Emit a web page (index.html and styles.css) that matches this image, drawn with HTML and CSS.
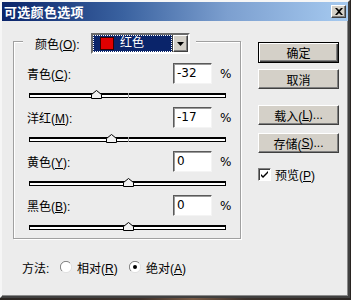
FILE: index.html
```html
<!DOCTYPE html>
<html lang="zh-CN">
<head>
<meta charset="utf-8">
<title>可选颜色选项</title>
<link rel="stylesheet" href="styles.css">
</head>
<body>
<div class="window">
  <div class="titlebar">
    <span class="title">可选颜色选项</span>
    <span class="close"><svg width="8" height="7" viewBox="0 0 8 7"><path d="M0 0h2l2 2 2-2h2L5 3.5 8 7H6L4 5 2 7H0l3-3.5z" fill="#000"/></svg></span>
  </div>
  <div class="client">
    <div class="main">
      <div class="left">
        <div class="group-head">
          <span class="head-lbl">颜色(<u>O</u>):</span>
          <div class="select">
            <span class="select-field"><span class="swatch"></span><span class="select-text">红色</span></span>
            <span class="select-btn"><svg width="7" height="4" viewBox="0 0 7 4"><path d="M0 0h7L3.5 4z" fill="#000"/></svg></span>
          </div>
        </div>
        <div class="group">
          <div class="row"><span class="lbl">青色(<u>C</u>):</span><span class="field">-32</span><span class="pct">%</span></div>
          <div class="slider"><div class="track"><span class="mid"></span><svg class="thumb" style="left:61px" width="11" height="9" viewBox="0 0 11 9"><path d="M0.5 8.5V4.5L5.5 0.5L10.5 4.5V8.5Z" fill="#f2f2f2" stroke="#000"/></svg></div></div>
          <div class="row"><span class="lbl">洋红(<u>M</u>):</span><span class="field">-17</span><span class="pct">%</span></div>
          <div class="slider"><div class="track"><span class="mid"></span><svg class="thumb" style="left:76px" width="11" height="9" viewBox="0 0 11 9"><path d="M0.5 8.5V4.5L5.5 0.5L10.5 4.5V8.5Z" fill="#f2f2f2" stroke="#000"/></svg></div></div>
          <div class="row"><span class="lbl">黄色(<u>Y</u>):</span><span class="field">0</span><span class="pct">%</span></div>
          <div class="slider"><div class="track"><span class="mid"></span><svg class="thumb" style="left:93px" width="11" height="9" viewBox="0 0 11 9"><path d="M0.5 8.5V4.5L5.5 0.5L10.5 4.5V8.5Z" fill="#f2f2f2" stroke="#000"/></svg></div></div>
          <div class="row"><span class="lbl">黑色(<u>B</u>):</span><span class="field">0</span><span class="pct">%</span></div>
          <div class="slider"><div class="track"><span class="mid"></span><svg class="thumb" style="left:93px" width="11" height="9" viewBox="0 0 11 9"><path d="M0.5 8.5V4.5L5.5 0.5L10.5 4.5V8.5Z" fill="#f2f2f2" stroke="#000"/></svg></div></div>
        </div>
      </div>
      <div class="right">
        <button class="btn btn-default">确定</button>
        <button class="btn btn-cancel">取消</button>
        <button class="btn btn-load">载入(<u>L</u>)...</button>
        <button class="btn btn-save">存储(<u>S</u>)...</button>
        <label class="check"><span class="box"><svg width="9" height="9" viewBox="0 0 9 9"><path d="M1 4l2 2 5-5v2L3 8 1 6z" fill="#000"/></svg></span><span>预览(<u>P</u>)</span></label>
      </div>
    </div>
    <div class="method">
      <span class="method-lbl">方法:</span>
      <span class="radio"><svg width="12" height="12" viewBox="0 0 12 12"><circle cx="6" cy="6" r="5.5" fill="#fff"/><path d="M10 2A5.5 5.5 0 0 0 2 10" fill="none" stroke="#808080"/><path d="M2 10A5.5 5.5 0 0 0 10 2" fill="none" stroke="#e0e0e0"/></svg></span>
      <span class="radio-text">相对(<u>R</u>)</span>
      <span class="radio radio-on"><svg width="12" height="12" viewBox="0 0 12 12"><circle cx="6" cy="6" r="5.5" fill="#fff"/><path d="M10 2A5.5 5.5 0 0 0 2 10" fill="none" stroke="#808080"/><path d="M2 10A5.5 5.5 0 0 0 10 2" fill="none" stroke="#e0e0e0"/><circle cx="6" cy="6" r="2" fill="#000"/></svg></span>
      <span class="radio-text">绝对(<u>A</u>)</span>
    </div>
  </div>
</div>
</body>
</html>
```
FILE: styles.css
```css
* { box-sizing: border-box; }
html, body { margin: 0; padding: 0; }
body {
  width: 351px;
  height: 300px;
  overflow: hidden;
  background: linear-gradient(90deg, #2a2522 0%, #3d3029 40%, #7a5a44 55%, #3a302a 70%, #2a2522 100%);
  font-family: "Liberation Sans", "Noto Sans CJK SC", sans-serif;
  font-size: 12px;
  color: #000;
}
u { text-decoration: underline; text-underline-offset: 1px; }
.window {
  width: 350px;
  height: 298px;
  background: #ececec;
  border: 2px solid;
  border-color: #f6f6f6 #404040 #404040 #f6f6f6;
  box-shadow: inset -1px -1px #8a8a8a;
  display: flex;
  flex-direction: column;
}
.titlebar {
  height: 19px;
  background: linear-gradient(90deg, #0a246a 0%, #3a62a0 35%, #7c9fcf 65%, #a6caf0 100%);
  display: flex;
  align-items: center;
  justify-content: space-between;
  padding: 0 1px 0 2px;
}
.title {
  color: #fff;
  font-weight: bold;
  font-size: 13px;
  letter-spacing: 0.3px;
  font-family: "Noto Sans CJK SC", sans-serif;
  line-height: 19px;
}
.close {
  width: 15px;
  height: 13px;
  background: #d4d0c8;
  border: 1px solid;
  border-color: #fff #404040 #404040 #fff;
  box-shadow: inset -1px -1px #808080;
  display: flex;
  align-items: center;
  justify-content: center;
  margin-right: 1px;
}
.client {
  flex: 1;
  padding: 12px 0 0 11px;
  display: flex;
  flex-direction: column;
}
.main { display: flex; }
.left { width: 228px; display: flex; flex-direction: column; }
.group-head {
  position: relative;
  z-index: 1;
  align-self: flex-start;
  margin-left: 10px;
  margin-bottom: -13px;
  height: 21px;
  padding: 0 6px 0 12px;
  background: #ececec;
  display: flex;
  align-items: center;
}
.head-lbl { width: 56px; }
.select {
  width: 99px;
  height: 21px;
  display: flex;
  border: 2px solid;
  border-color: #6a6a6a #fff #fff #6a6a6a;
  background: #404040;
}
.select-field {
  flex: 1;
  background: #0a246a;
  outline: 1px dotted #fff;
  outline-offset: -1px;
  display: flex;
  align-items: center;
  padding-left: 7px;
  color: #fff;
  margin: 0 1px 0 0;
}
.swatch {
  width: 14px;
  height: 13px;
  background: #e00000;
  border: 1px solid #3a0000;
  margin-right: 6px;
}
.select-text { line-height: 17px; }
.select-btn {
  width: 15px;
  background: #d4d0c8;
  border: 1px solid;
  border-color: #fff #404040 #404040 #fff;
  box-shadow: inset -1px -1px #808080;
  display: flex;
  align-items: center;
  justify-content: center;
}
.group {
  height: 198px;
  border: 1px solid #a0a0a0;
  box-shadow: 1px 1px 0 #fff, inset 1px 1px 0 #fff;
  padding: 21px 0 0 13px;
}
.row {
  height: 21px;
  display: flex;
  align-items: center;
}
.lbl { width: 146px; }
.field {
  width: 39px;
  height: 21px;
  background: #fff;
  border: 1px solid;
  border-color: #5a5a5a #f4f4f4 #f4f4f4 #5a5a5a;
  box-shadow: inset 1px 1px #9a9a9a;
  padding: 0 3px;
  line-height: 19px;
  font-family: "DejaVu Sans", sans-serif;
  font-size: 12px;
}
.pct { margin-left: 8px; font-family: "DejaVu Sans", sans-serif; font-size: 12px; }
.slider { height: 23px; padding-top: 9px; padding-left: 2px; }
.track {
  position: relative;
  width: 197px;
  height: 5px;
  border: 1px solid #000;
  border-top-width: 2px;
  background: #fff;
}
.mid {
  position: absolute;
  left: 98px;
  top: -2px;
  width: 1px;
  height: 5px;
  background: #9a9a9a;
}
.thumb { position: absolute; top: -5px; }
.right {
  margin-left: 17px;
  padding-top: 9px;
  display: flex;
  flex-direction: column;
  align-items: flex-start;
}
.btn {
  width: 81px;
  height: 20px;
  padding: 0;
  font: inherit;
  font-size: 12px;
  color: #000;
  background: #d4d0c8;
  border: 1px solid;
  border-color: #fff #404040 #404040 #fff;
  box-shadow: inset -1px -1px #808080;
  display: flex;
  align-items: center;
  justify-content: center;
}
.btn-default {
  height: 21px;
  border: 1px solid #000;
  box-shadow: inset 1px 1px #fff, inset -1px -1px #404040, inset -2px -2px #808080;
}
.btn-cancel { margin-top: 6px; }
.btn-load { margin-top: 16px; }
.btn-save { margin-top: 8px; }
.check {
  margin-top: 15px;
  display: flex;
  align-items: center;
  height: 13px;
}
.box {
  width: 13px;
  height: 13px;
  background: #fff;
  border: 1px solid;
  border-color: #808080 #fff #fff #808080;
  box-shadow: inset 1px 1px #404040;
  display: flex;
  align-items: center;
  justify-content: center;
  margin-right: 4px;
}
.method {
  margin-top: 20px;
  padding-left: 9px;
  height: 16px;
  display: flex;
  align-items: center;
}
.method-lbl { width: 38px; }
.radio { width: 12px; height: 12px; display: flex; margin-right: 5px; }
.radio-text { width: 52px; }
```
